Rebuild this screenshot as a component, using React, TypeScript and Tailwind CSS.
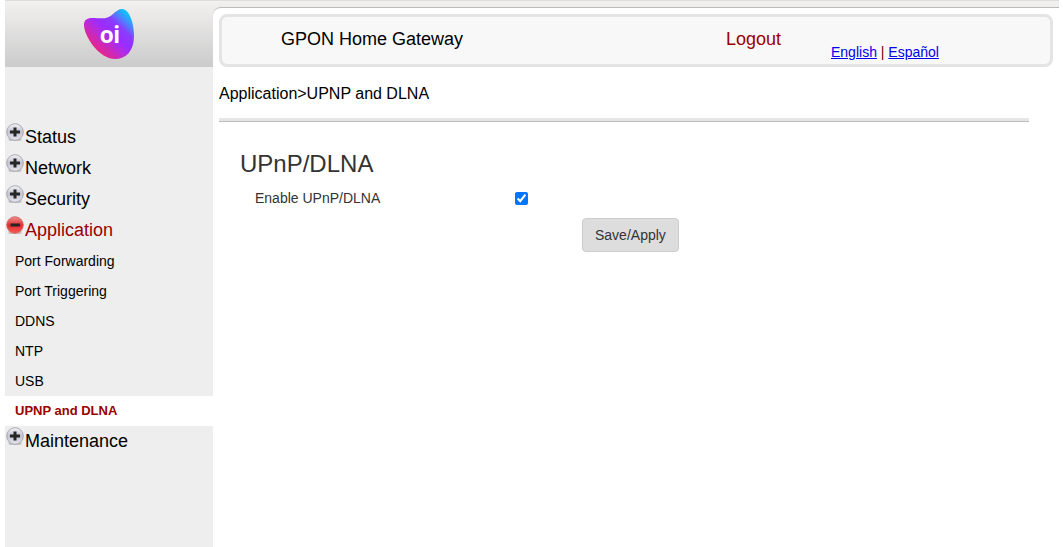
import { clsx } from 'clsx';

const subItems = ['Port Forwarding', 'Port Triggering', 'DDNS', 'NTP', 'USB', 'UPNP and DLNA'];

const Logo = () => (
  <svg viewBox="0 0 50 50" className="h-[50px] w-[50px]" role="img" aria-label="oi">
    <defs>
      <linearGradient id="blob" gradientUnits="userSpaceOnUse" x1="8" y1="40" x2="42" y2="3">
        <stop offset="0" stopColor="#f0247c" />
        <stop offset="0.36" stopColor="#b42be0" />
        <stop offset="0.5" stopColor="#9a2cff" />
        <stop offset="0.7" stopColor="#8a3cff" />
        <stop offset="0.85" stopColor="#4c84ff" />
        <stop offset="1" stopColor="#0cc4ff" />
      </linearGradient>
    </defs>
    <path
      d="M0 16C0 11 3 9 8 9C18 9 22 11 29 5C32 2 35 0 38 0C46 0 50 16 50 27C50 42 42 50 31 50C15 50 0 27 0 16Z"
      fill="url(#blob)"
    />
    <text
      x="16"
      y="34"
      fill="#fff"
      fontSize="24"
      fontWeight="700"
      className="font-[Roboto,sans-serif]"
    >
      oi
    </text>
  </svg>
);

const Ball = ({ open }: { open?: boolean }) => {
  const id = open ? 'ball-open' : 'ball-closed';
  return (
    <svg viewBox="0 0 18 18" className="h-[18px] w-[18px] shrink-0" aria-hidden="true">
      <defs>
        <linearGradient id={id} x1="0" y1="0" x2="0" y2="1">
          <stop offset="0" stopColor={open ? '#f08c8c' : '#f2f2f6'} />
          <stop offset="0.3" stopColor={open ? '#e85858' : '#d6d6e0'} />
          <stop offset="0.5" stopColor={open ? '#e22c2c' : '#c2c2d0'} />
          <stop offset="1" stopColor={open ? '#f85858' : '#e8e8f0'} />
        </linearGradient>
      </defs>
      <rect x="2.500" y="14" width="13" height="4" rx="1.500" fill={open ? '#d8b8b8' : '#c8c8ca'} />
      <circle
        cx="9"
        cy="9"
        r="8.3"
        fill={`url(#${id})`}
        stroke={open ? '#c86464' : '#9c9ca4'}
        strokeWidth="0.8"
      />
      <path d={open ? 'M4.500 7.500h9.500v3h-9.500z' : 'M7.500 4.500h3v3h3.500v3h-3.500v3h-3v-3h-3.500v-3h3.500z'} fill="#262626" />
    </svg>
  );
};

const MenuItem = ({ label, open }: { label: string; open?: boolean }) => (
  <a
    href="#"
    className={clsx('flex h-[31px] items-start pl-px text-lg', open ? 'text-[#990000]' : 'text-black')}
  >
    <span className="pt-px">
      <Ball open={open} />
    </span>
    <span className="pl-px leading-[31px]">{label}</span>
  </a>
);

const Sidebar = () => (
  <aside className="w-[208px] shrink-0">
    <div className="flex h-[67px] justify-center pt-[9px]">
      <Logo />
    </div>
    <nav className="pt-[55px]">
      <MenuItem label="Status" />
      <MenuItem label="Network" />
      <MenuItem label="Security" />
      <MenuItem label="Application" open />
      {subItems.map((item) => (
        <a
          key={item}
          href="#"
          className={clsx(
            'block pl-2.5 leading-[30px]',
            item === 'UPNP and DLNA' ? 'bg-white text-[13px] font-bold text-[#990000]' : 'text-sm text-black',
          )}
        >
          {item}
        </a>
      ))}
      <MenuItem label="Maintenance" />
    </nav>
  </aside>
);

const Header = () => (
  <header className="mr-1.5 ml-1.5 flex h-[53px] items-start rounded-lg border-[3px] border-[#e5e4e4] bg-[#f8f8f8] pl-[59px]">
    <span className="w-[445px] pt-2 text-lg">GPON Home Gateway</span>
    <a href="#" className="w-[105px] pt-2 text-lg text-[#990000]">
      Logout
    </a>
    <div className="pt-[25px] text-sm text-[#660000]">
      <a href="#" className="text-[#0000ee] underline">
        English
      </a>{' '}
      |{' '}
      <a href="#" className="text-[#0000ee] underline">
        Español
      </a>
    </div>
  </header>
);

export default function App() {
  return (
    <div className="bg-white pr-1 pl-[5px] font-['Liberation_Sans',Arial,sans-serif] text-black">
      <div className="flex min-h-screen border-t border-[#dddddd] bg-[#eeeeee] bg-[linear-gradient(#f3f1f0,#cbcbcb)] bg-[length:100%_66px] bg-no-repeat">
        <div className="-mt-px flex grow">
          <Sidebar />
          <main className="mt-[7px] grow rounded-tl-lg border-t border-[#bbbbbb] bg-white pt-1.5">
            <Header />
            <p className="pt-[15px] pl-1.5 text-base">Application&gt;UPNP and DLNA</p>
            <hr className="mt-3 mr-[30px] ml-1.5 h-1 border-t-0 border-b border-[#bbbbbb] bg-[#e6e6e6]" />
            <form className="pr-[30px] pl-[27px] text-sm text-[#333333]">
              <h1 className="pt-[26px] text-2xl">UPnP/DLNA</h1>
              <div className="flex items-center pt-2 pl-[15px]">
                <label htmlFor="enable" className="w-[260px]">
                  Enable UPnP/DLNA
                </label>
                <input id="enable" type="checkbox" defaultChecked className="h-[13px] w-[13px]" />
              </div>
              <div className="pt-2.5 pl-[342px]">
                <button
                  type="button"
                  className="h-[34px] rounded border border-[#cccccc] bg-[#dddddd] px-3 text-sm"
                >
                  Save/Apply
                </button>
              </div>
            </form>
          </main>
        </div>
      </div>
    </div>
  );
}
